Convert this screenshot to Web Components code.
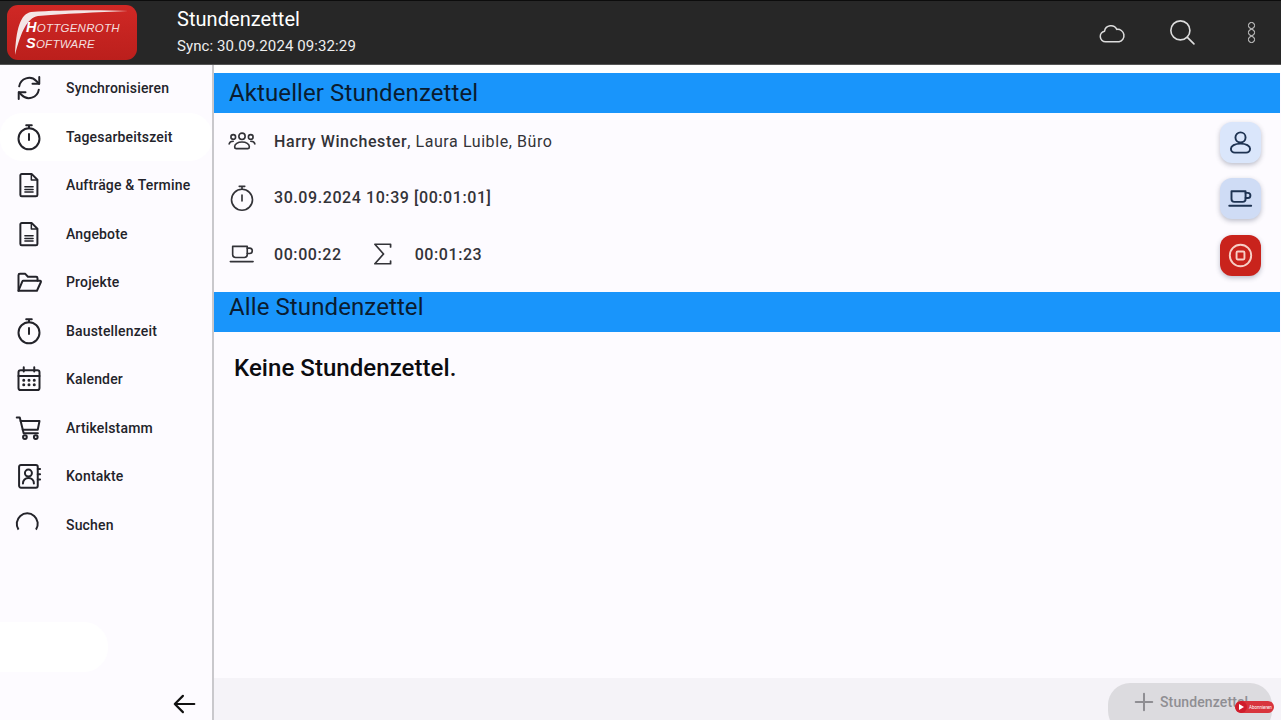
<!DOCTYPE html>
<html lang="de"><head><meta charset="utf-8"><title>Stundenzettel</title>
<style>
html,body{margin:0;padding:0;width:1281px;height:723px;overflow:hidden;background:#fff;font-family:Roboto,"Liberation Sans",sans-serif}
</style></head><body>
<app-shell>
  <top-bar slot="top" title-text="Stundenzettel" sync="Sync: 30.09.2024 09:32:29"></top-bar>
  <side-nav slot="side">
    <nav-item icon="sync">Synchronisieren</nav-item>
    <nav-item icon="timer" active>Tagesarbeitszeit</nav-item>
    <nav-item icon="doc">Aufträge &amp; Termine</nav-item>
    <nav-item icon="doc">Angebote</nav-item>
    <nav-item icon="folder">Projekte</nav-item>
    <nav-item icon="timer">Baustellenzeit</nav-item>
    <nav-item icon="cal">Kalender</nav-item>
    <nav-item icon="cart">Artikelstamm</nav-item>
    <nav-item icon="contact">Kontakte</nav-item>
    <nav-item icon="search">Suchen</nav-item>
  </side-nav>
  <main-pane slot="main">
    <section-head lh="41">Aktueller Stundenzettel</section-head>
    <info-panel>
      <info-row icon="people" fab="user" fab-kind="light"><b>Harry Winchester</b><span class="thin">, Laura Luible, Büro</span></info-row>
      <info-row icon="timer" fab="cup" fab-kind="mid"><b>30.09.2024 10:39 [00:01:01]</b></info-row>
      <info-row icon="cup" fab="stop" fab-kind="red" extra="00:01:23"><b>00:00:22</b></info-row>
    </info-panel>
    <section-head lh="31">Alle Stundenzettel</section-head>
    <empty-note>Keine Stundenzettel.</empty-note>
  </main-pane>
</app-shell>
<script>
const P={
 sync:'<path d="M3.600 10.600A8.600 8.600 0 0 1 18.300 6l2.300 2.300"/><path d="M20.800 2.600v5.800H15"/><path d="M20.400 13.400A8.600 8.600 0 0 1 5.700 18l-2.300-2.300"/><path d="M3.200 21.400v-5.800H9"/>',
 timer:'<circle cx="12" cy="13.500" r="9"/><path d="M12 9.500v5M9.600 2h4.800M12 2v2.500"/>',
 doc:'<path d="M5.800 2.500h8.400l5 5v13a1.200 1.200 0 0 1-1.200 1.200H5.800a1.200 1.200 0 0 1-1.200-1.200V3.700a1.200 1.200 0 0 1 1.200-1.200z"/><path d="M14 2.500v5.200h5.200M8.500 13.500h7M8.500 15.800h7M8.500 18h7" stroke-width="1.300"/>',
 folder:'<path d="M3 19.500V6.200A1.200 1.200 0 0 1 4.200 5h4.600l2.300 2.500h7a1.200 1.200 0 0 1 1.200 1.200V11"/><path d="M3 19.500h15.800l3.400-7.500a.7.700 0 0 0-.7-1H7.200a1 1 0 0 0-1 .6z"/>',
 cal:'<rect x="3" y="4.500" width="18" height="17" rx="1.800"/><path d="M3 9.500h18M7.500 2v3.500M16.500 2v3.500"/><path d="M7.500 13h.01M12 13h.01M16.500 13h.01M7.500 17h.01M12 17h.01M16.500 17h.01" stroke-width="2.600"/>',
 cart:'<path d="M1.500 3h2.600l3.300 13.500h12.200"/><path d="M4.800 6h16.200l-1.500 7.500H6.600"/><circle cx="8.500" cy="19.800" r="1.600"/><circle cx="17.800" cy="19.800" r="1.600"/>',
 contact:'<rect x="3.500" y="2.500" width="16" height="19.500" rx="1.600"/><circle cx="11.500" cy="9.500" r="3"/><path d="M6.800 18.500c0-3 2-4.800 4.700-4.800s4.700 1.800 4.700 4.800M19.500 6h2M19.500 10.500h2M19.500 15h2"/>',
 search:'<path d="M3 16A9 9 0 1 1 18 16" stroke-linecap="butt"/>',
 people:'<circle cx="12" cy="8" r="2.700"/><circle cx="4.500" cy="8.500" r="2"/><circle cx="19.500" cy="8.500" r="2"/><path d="M7 18.500a1.500 1.500 0 0 1-1.300-1.600c0-2.300 2.700-4 6.300-4s6.300 1.700 6.300 4a1.500 1.500 0 0 1-1.300 1.600zM1 14.500c.3-1.500 1.700-2.300 3.500-2.300M23 14.500c-.3-1.500-1.700-2.300-3.500-2.300"/>',
 cup:'<path d="M4 5.500h12.500v7a2.500 2.500 0 0 1-2.500 2.500H6.500A2.500 2.500 0 0 1 4 12.500z"/><path d="M16.500 7h2a2.300 2.300 0 0 1 0 4.600h-2M2 18.500h19.500"/>',
 sigma:'<path d="M19 5.500V3H4.500l8 9-8 9H19v-2.500"/>',
 user:'<circle cx="12" cy="7.500" r="4.500"/><path d="M7 21a3.500 3.500 0 0 1-3.500-3.500c0-2.500 3.500-4.500 8.500-4.500s8.500 2 8.500 4.500A3.500 3.500 0 0 1 17 21z"/>',
 stop:'<circle cx="12" cy="12" r="9.500"/><rect x="8.500" y="8.500" width="7" height="7" rx="1"/>',
 cloud:'<path d="M6.500 19.500a4.600 4.600 0 0 1-.9-9.100 5.600 5.600 0 0 1 10.500-1.500 5.400 5.400 0 0 1 2 10.600z"/>',
 find:'<circle cx="10.500" cy="10.500" r="8.800"/><path d="M17 17l6 6"/>',
 back:'<path d="M21.500 12H3.500M11 4.500 3.500 12l7.500 7.500"/>',
 plus:'<path d="M12 3v18M3 12h18"/>'
};
const svg=(n,s,w,c='currentColor')=>`<svg width="${s}" height="${s}" viewBox="0 0 24 24" fill="none" stroke="${c}" stroke-width="${w}" stroke-linecap="round" stroke-linejoin="round" aria-hidden="true">${P[n]}</svg>`;
class Base extends HTMLElement{
  html(h){this.attachShadow({mode:'open'}).innerHTML=h}
}
customElements.define('app-shell',class extends Base{constructor(){super();this.html(`<style>
:host{display:grid;grid-template-columns:214px 1fr;grid-template-rows:65px 655px 3px;width:1281px;height:723px;background:#fff;overflow:hidden}
.top{grid-column:1/3}
.strip{grid-column:1/3;background:#fff}
</style><div class="top"><slot name="top"></slot></div><slot name="side"></slot><slot name="main"></slot><div class="strip"></div>`)}});
customElements.define('top-bar',class extends Base{constructor(){super();this.html(`<style>
:host{display:flex;align-items:center;height:65px;box-sizing:border-box;background:#272727;border-top:1px solid #0c0c0c;border-bottom:1px solid #555;color:#fff;font-family:Roboto,sans-serif}
.logo{margin-left:7px;width:130px;height:55px;flex:none;border-radius:11px;background:linear-gradient(180deg,#d02825,#bb1f1c);position:relative;overflow:hidden;font-family:"Liberation Sans",sans-serif;font-style:italic;color:#f3dede;font-size:11.500px;line-height:15px;letter-spacing:.25px}
.logo svg{position:absolute;left:0;top:0}
.lt{position:absolute;left:19px;top:15px;white-space:nowrap}
.lt b{font-size:14.500px;font-weight:700;color:#fff}
.txt{margin-left:40px;flex:1;display:flex;flex-direction:column;gap:6px;margin-top:-3px}
.t{font-size:20px;line-height:24px;letter-spacing:.05px}
.s{font-size:15px;line-height:18px;letter-spacing:.1px;color:#eee}
.acts{display:flex;align-items:center;color:#ddd}
.acts span{display:flex;align-items:center;justify-content:center}
.c{width:28px;margin-right:42px}.f{width:28px;margin-right:52px;margin-top:-2px}
.m{flex-direction:column;gap:.5px;margin-right:26px;width:7px}
.m i{display:block;box-sizing:border-box;width:6.500px;height:6.500px;border:1.500px solid #ddd;border-radius:50%}
</style><div class="logo"><svg width="130" height="55" viewBox="0 0 130 55"><path d="M8 50C9 25 13 9 24 7 55 5 95 5 121 6 90 7 55 9 31 11 20 13 14 27 8 50z" fill="#f4e6e6"/></svg><div class="lt"><b>H</b>OTTGENROTH<br><b>S</b>OFTWARE</div></div>
<div class="txt"><div class="t">${this.getAttribute('title-text')}</div><div class="s">${this.getAttribute('sync')}</div></div>
<div class="acts"><span class="c">${svg('cloud',28,1.300)}</span><span class="f">${svg('find',26,1.500)}</span><span class="m"><i></i><i></i><i></i></span></div>`)}});
customElements.define('side-nav',class extends Base{constructor(){super();this.html(`<style>
:host{display:flex;flex-direction:column;position:relative;background:#fdfbff;border-right:2px solid #c9c8cc;box-sizing:border-box;width:214px;height:655px}
.list{height:467px;overflow:hidden;display:flex;flex-direction:column;flex:none;margin-top:-1px}
.spacer{flex:1}
.blob{position:absolute;left:0;top:557px;width:108px;height:50px;background:#fff;border-radius:0 24px 24px 0}
.back{display:flex;justify-content:flex-end;padding:0 15px 2px 0;color:#111;height:27px}
</style><div class="list"><slot></slot></div><div class="spacer"></div><div class="blob"></div><div class="back">${svg('back',26,2)}</div>`)}});
customElements.define('nav-item',class extends Base{constructor(){super();const a=this.hasAttribute('active');this.html(`<style>
:host{display:flex;align-items:center;height:48.500px;flex:none;box-sizing:border-box;color:#23232a;font-family:Roboto,sans-serif;font-size:14px;font-weight:500;letter-spacing:.17px;white-space:nowrap;${a?'background:#fff;border-radius:22px;':''}}
.i{width:28px;height:28px;margin-left:15px;margin-right:23px;display:flex;flex:none}
</style><span class="i">${svg(this.getAttribute('icon'),28,1.700)}</span><slot></slot>`)}});
customElements.define('main-pane',class extends Base{constructor(){super();this.html(`<style>
:host{display:flex;flex-direction:column;position:relative;background:#fdfbff;padding:8px 1px 0 0;box-sizing:border-box;height:655px}
:host::before{content:"";position:absolute;left:0;right:0;top:0;height:8px;background:#fff}
.foot{position:absolute;left:0;right:0;bottom:0;height:42px;background:#f5f3f8;overflow:hidden}
.btn{position:absolute;left:894px;top:5px;width:164px;height:50px;border-radius:22px;background:#dcdbdf;color:#8f8e93;display:flex;align-items:flex-start;font:500 14px Roboto,sans-serif;letter-spacing:.12px;box-sizing:border-box;padding:11px 0 0 25px;gap:5px}
.btn svg{margin-top:-3px}
.sub{position:absolute;left:1021px;bottom:7px;width:39px;height:12px;border-radius:6px;background:#d8343c;z-index:3;display:flex;align-items:center;color:#fff;font:4.500px Roboto,sans-serif;white-space:nowrap;overflow:hidden}
.sub i{display:block;flex:none;width:12px;height:12px;border-radius:50%;background:#d01c2c;margin-right:2px;position:relative}
.sub i::after{content:"";position:absolute;left:4px;top:3px;border-left:5px solid #fff;border-top:3px solid transparent;border-bottom:3px solid transparent}
</style><slot></slot><div class="foot"><div class="btn">${svg('plus',22,2.200)}<span>Stundenzettel</span></div></div><div class="sub"><i></i>Abonnieren</div>`)}});
customElements.define('section-head',class extends Base{constructor(){super();this.html(`<style>
:host{display:block;height:40px;background:#1995fb;color:#0a1c30;font:400 24px/${this.getAttribute('lh')}px Roboto,sans-serif;padding-left:15px;letter-spacing:.1px;white-space:nowrap;flex:none}
</style><slot></slot>`)}});
customElements.define('info-panel',class extends Base{constructor(){super();this.html(`<style>
:host{display:flex;flex-direction:column;height:179px;padding-top:1px;box-sizing:border-box;flex:none}
</style><slot></slot>`)}});
customElements.define('info-row',class extends Base{constructor(){super();const x=this.getAttribute('extra'),k=this.getAttribute('fab-kind');const bg={light:'#dae6fb',mid:'#cfdcf5',red:'#c9231c'}[k];const col=k==='red'?'#f7cfc6':'#1e3352';this.html(`<style>
:host{display:flex;align-items:center;height:56.500px;flex:none;padding:0 19px 0 14px;color:#333338;font:400 16px Roboto,sans-serif;letter-spacing:.58px;white-space:nowrap}
.ic{display:flex;width:28px;margin:-2px 18px 0 0;flex:none;justify-content:center}
.tx{flex:1;display:flex;align-items:center;margin-top:-2px}
::slotted(b){font-weight:500}
.sig{display:flex;width:26px;justify-content:center;margin:0 19px 0 28px}
.fab{width:41px;height:41px;border-radius:12px;background:${bg};color:${col};display:flex;align-items:center;justify-content:center;box-shadow:0 2px 5px rgba(40,50,80,.3);flex:none}
</style><span class="ic">${svg(this.getAttribute('icon'),28,1.400)}</span><span class="tx"><slot></slot>${x?`<span class="sig">${svg('sigma',26,1.600)}</span><span style="font-weight:500">${x}</span>`:''}</span><span class="fab">${svg(this.getAttribute('fab'),27,1.700)}</span>`)}});
customElements.define('empty-note',class extends Base{constructor(){super();this.html(`<style>
:host{display:block;padding:21px 0 0 20px;font:500 24px/30px Roboto,sans-serif;letter-spacing:.05px;color:#0c0c10;white-space:nowrap}
</style><slot></slot>`)}});
</script>
</body></html>
